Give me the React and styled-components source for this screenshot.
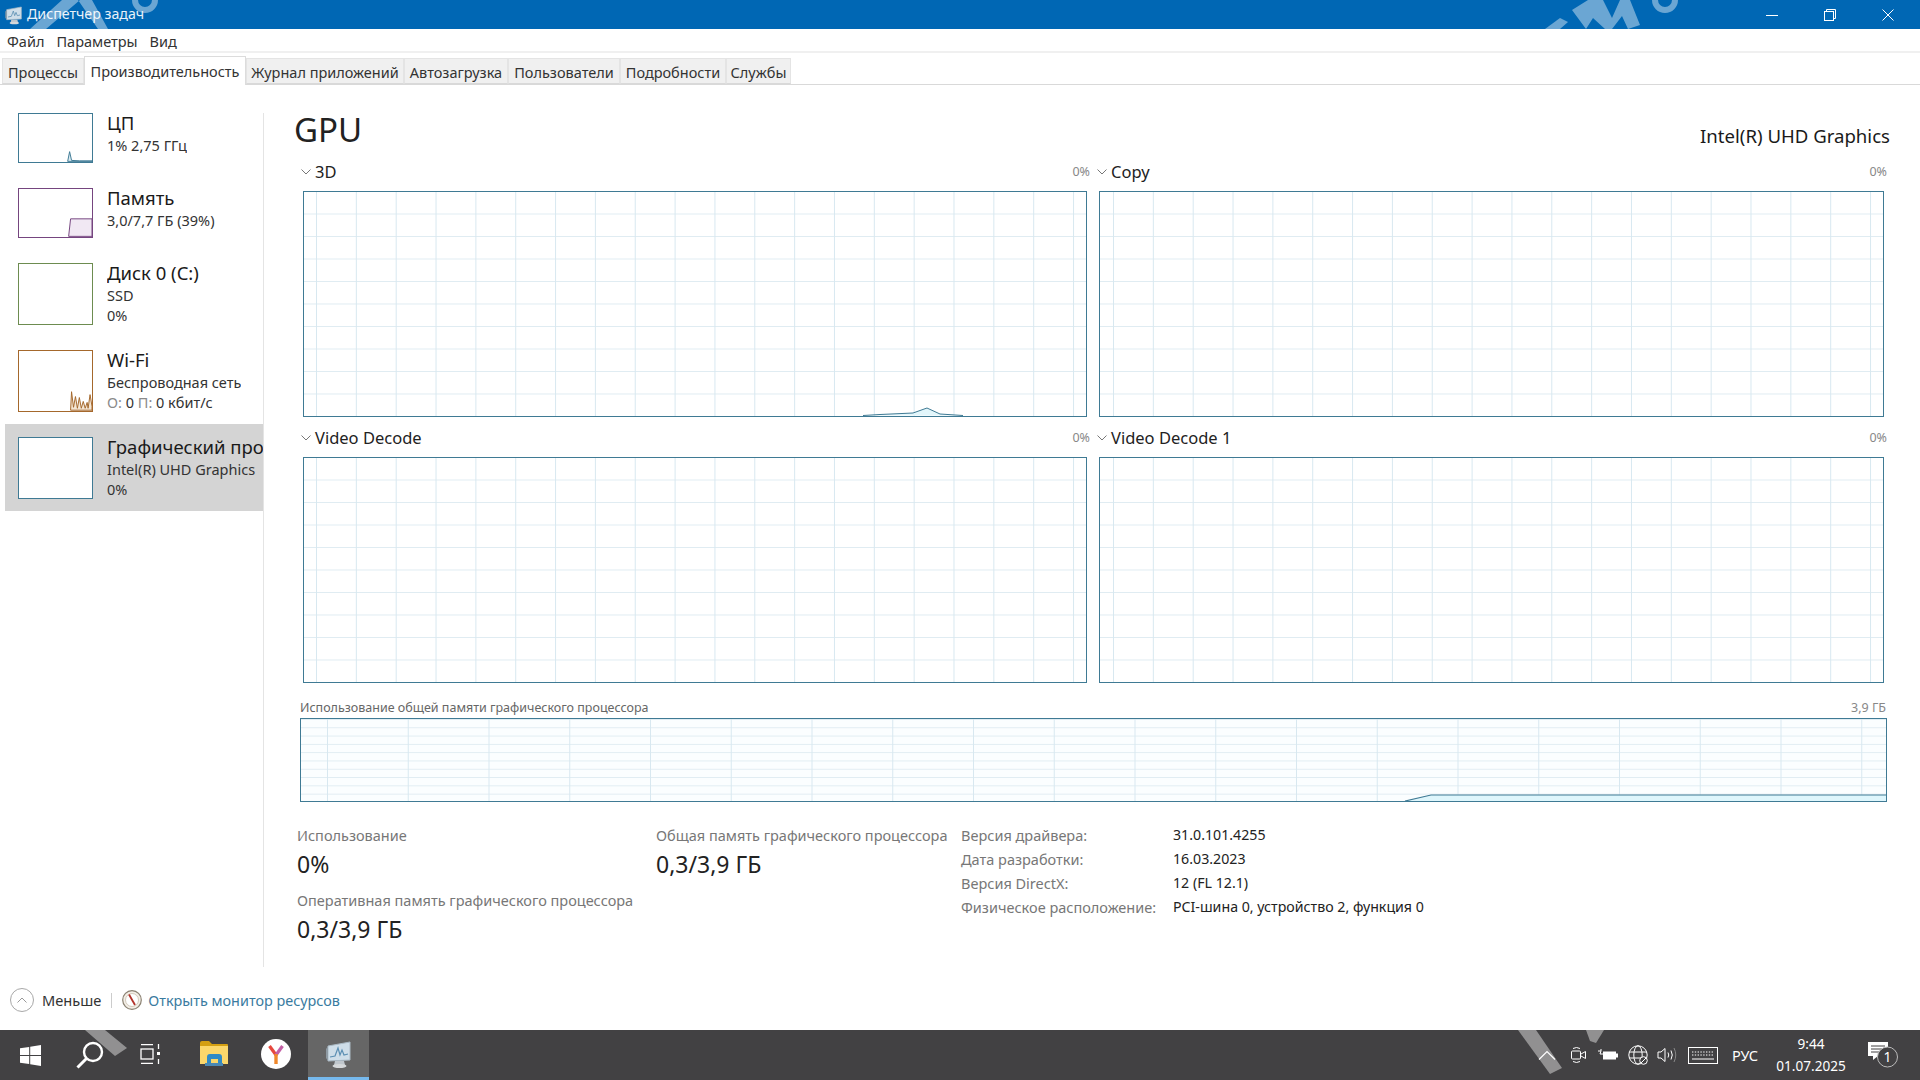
import styled, { createGlobalStyle } from "styled-components";

const GlobalStyle = createGlobalStyle`
  html, body {
    margin: 0;
    padding: 0;
    background: #fff;
  }
  body {
    font-family: "Noto Sans", "Open Sans", sans-serif;
    color: #1a1a1a;
    overflow: hidden;
  }
`;

const TABS = ["Процессы", "Производительность", "Журнал приложений", "Автозагрузка", "Пользователи", "Подробности", "Службы"];
const TAB_WIDTHS = [82, 162, 158, 104, 112, 106, 65];

const DEVICES = [
  { title: "ЦП", lines: ["1% 2,75 ГГц"], color: "#3f7a94", h: 50, tall: false, kind: "cpu" },
  { title: "Память", lines: ["3,0/7,7 ГБ (39%)"], color: "#75457f", h: 50, tall: false, kind: "mem" },
  { title: "Диск 0 (C:)", lines: ["SSD", "0%"], color: "#6d8c50", h: 62, tall: true, kind: "none" },
  { title: "Wi-Fi", lines: ["Беспроводная сеть", "net"], color: "#a5682c", h: 62, tall: true, kind: "net" },
  { title: "Графический процессор", lines: ["Intel(R) UHD Graphics", "0%"], color: "#3f7a94", h: 62, tall: true, kind: "gpu", active: true },
];

const DRIVER = [
  ["Версия драйвера:", "31.0.101.4255"],
  ["Дата разработки:", "16.03.2023"],
  ["Версия DirectX:", "12 (FL 12.1)"],
  ["Физическое расположение:", "PCI-шина 0, устройство 2, функция 0"],
];

function ThumbLine({ kind, color }) {
  if (kind === "cpu") {
    return (
      <svg width="75" height="48" viewBox="0 0 75 48">
        <path d="M50 48 L52 38 L54 47 L62 47.5 L75 47.5 L75 48 Z" fill="#dcecf3" stroke={color} strokeWidth="1" />
      </svg>
    );
  }
  if (kind === "mem") {
    return (
      <svg width="75" height="48" viewBox="0 0 75 48">
        <path d="M51 48 L53 30 L75 30 L75 48 Z" fill="#f1e8f3" stroke={color} strokeWidth="1" />
      </svg>
    );
  }
  if (kind === "net") {
    return (
      <svg width="75" height="60" viewBox="0 0 75 60">
        <path
          d="M53 60 L54 41 L56 57 L58 46 L60 58 L62 47 L64 58 L66 51 L68 58 L70 52 L71 58 L73 44 L75 56 L75 60 Z"
          fill="#f4e6d4"
          stroke={color}
          strokeWidth="1"
        />
      </svg>
    );
  }
  return null;
}

function Chevron({ color = "#777", up }) {
  return (
    <svg width="10" height="6" viewBox="0 0 10 6">
      <path d={up ? "M0.5 5.5 L5 1 L9.5 5.5" : "M0.5 0.5 L5 5 L9.5 0.5"} fill="none" stroke={color} strokeWidth="1" />
    </svg>
  );
}

function GpuChart({ title, $offset, spark }) {
  return (
    <Panel>
      <PanelHead>
        <PanelTitle>
          <Chevron />
          {title}
        </PanelTitle>
        <SmallGray>0%</SmallGray>
      </PanelHead>
      <Graph $offset={$offset}>
        {spark && (
          <svg width="782" height="224" viewBox="304 193 782 224">
            <path d="M863 416.5 L913 414 L927 409 L940 415 L963 416.5 Z" fill="#e2f6fb" />
            <path d="M863 416.5 L880 415.5 L913 414 L927 409 L940 415 L963 416.5" fill="none" stroke="#3f7a94" strokeWidth="1" />
          </svg>
        )}
      </Graph>
    </Panel>
  );
}

function WindowsLogo() {
  return (
    <svg width="21" height="21" viewBox="0 0 21 21" fill="#fff">
      <path d="M0 3.2 L9.2 2 V10 H0 Z" />
      <path d="M10.2 1.8 L21 0 V10 H10.2 Z" />
      <path d="M0 11 H9.2 V19 L0 17.8 Z" />
      <path d="M10.2 11 H21 V21 L10.2 19.2 Z" />
    </svg>
  );
}

function SearchIcon() {
  return (
    <svg width="28" height="28" viewBox="0 0 28 28" fill="none" stroke="#fff">
      <circle cx="17" cy="11" r="9" strokeWidth="2.4" />
      <path d="M10.5 17.5 L1.5 26.5" strokeWidth="3" />
    </svg>
  );
}

function TaskViewIcon() {
  return (
    <svg width="21" height="20" viewBox="0 0 21 20" fill="none" stroke="#fff" strokeWidth="1.3">
      <path d="M1 0.7 H13 M1 19.3 H13" />
      <rect x="1" y="5" width="12" height="10" />
      <path d="M18.5 0 V5 M18.5 15 V20" />
      <rect x="17" y="8" width="3" height="3" fill="#fff" stroke="none" />
    </svg>
  );
}

function FolderIcon() {
  return (
    <svg width="28" height="25" viewBox="0 0 28 25">
      <path d="M0 2 Q0 0 2 0 H9 L12 3 H27 Q28 3 28 4 V6 H0 Z" fill="#d49f12" />
      <path d="M0 5 H28 V23 H0 Z" fill="#fbd76b" />
      <path d="M7 23 V16 Q7 13 10 13 H19 Q22 13 22 16 V23 H18 V18 H11 V23 Z" fill="#2f8ac6" />
      <path d="M5 22 H23 V25 H5 Z" fill="#4a88b4" />
    </svg>
  );
}

function YandexIcon() {
  return (
    <svg width="30" height="30" viewBox="0 0 30 30">
      <circle cx="15" cy="15" r="15" fill="#fff" />
      <path d="M15 16 L8.5 7" stroke="#e6483d" strokeWidth="3.2" fill="none" />
      <path d="M15 16 L21.5 7" stroke="#c35fa5" strokeWidth="3.2" fill="none" />
      <path d="M15 15 V25" stroke="#f0882b" strokeWidth="3.4" fill="none" />
    </svg>
  );
}

function MonitorIcon({ size = 30 }) {
  return (
    <svg width={size} height={size} viewBox="0 0 30 30">
      <path d="M4 7 L26 3 V21 L4 22 Z" fill="#cfdee9" stroke="#aab9c4" strokeWidth="1" />
      <path d="M6 18 L11 17 L14 9 L16 16 L18 11 L20 16 L24 15" fill="none" stroke="#5c8fb3" strokeWidth="1.2" />
      <path d="M11 22 H20 L21 26 H10 Z" fill="#bfc6cc" />
      <ellipse cx="15.5" cy="27" rx="7" ry="2" fill="#d5d8da" />
      <path d="M2 10 L4 7 V22 L2 19 Z" fill="#8e9aa3" />
    </svg>
  );
}

function ResourceIcon() {
  return (
    <svg width="20" height="20" viewBox="0 0 20 20">
      <circle cx="10" cy="10" r="9.3" fill="#f3eee6" stroke="#8a8172" strokeWidth="1.2" />
      <circle cx="10" cy="10" r="6.5" fill="#fff" stroke="#c9bfae" strokeWidth="0.8" />
      <path d="M7 4.5 L13 15" stroke="#b3322a" strokeWidth="1.8" />
    </svg>
  );
}

function TrayMeet() {
  return (
    <svg width="15" height="18" viewBox="0 0 15 18" fill="none" stroke="#fff" strokeWidth="1">
      <path d="M2 2.5 Q5.5 0.5 9 2.5 M2 15.5 Q5.5 17.5 9 15.5" />
      <rect x="0.5" y="5" width="9" height="8" rx="1" />
      <path d="M10 8 L14.5 5.5 V12.5 L10 10" />
    </svg>
  );
}

function TrayBattery() {
  return (
    <svg width="20" height="12" viewBox="0 0 20 12">
      <path d="M0 2 H3 V0 M3 2 L2 5 H5" fill="none" stroke="#fff" strokeWidth="1" />
      <rect x="5" y="2.5" width="13" height="8" fill="#fff" />
      <rect x="18" y="4.5" width="2" height="4" fill="#fff" />
    </svg>
  );
}

function TrayGlobe() {
  return (
    <svg width="20" height="20" viewBox="0 0 20 20" fill="none" stroke="#fff" strokeWidth="1">
      <circle cx="10" cy="10" r="9.2" />
      <ellipse cx="10" cy="10" rx="4.2" ry="9.2" />
      <path d="M1 7 H19 M1 13 H19" />
      <circle cx="15.5" cy="15.5" r="3.8" fill="#424143" />
      <path d="M13 18 L18 13" />
    </svg>
  );
}

function TraySound() {
  return (
    <svg width="20" height="16" viewBox="0 0 20 16" fill="none" stroke="#fff" strokeWidth="1">
      <path d="M1 5 H4 L8 1.5 V14.5 L4 11 H1 Z" />
      <path d="M11 5.5 Q12.5 8 11 10.5" />
      <path d="M14 3.5 Q16.5 8 14 12.5" />
      <path d="M17 1 Q20.5 8 17 15" stroke="#888" />
    </svg>
  );
}

function TrayKeyboard() {
  return (
    <svg width="30" height="17" viewBox="0 0 30 17" fill="none" stroke="#fff" strokeWidth="1">
      <rect x="0.5" y="0.5" width="29" height="16" />
      <path d="M4 5 H26 M4 8 H26" strokeDasharray="1.4 1.4" />
      <path d="M4 12 H26" />
    </svg>
  );
}

function Notification() {
  return (
    <svg width="31" height="27" viewBox="0 0 31 27">
      <path d="M0 0 H20 V14 H10 L5 18 V14 H0 Z" fill="#fff" />
      <path d="M3 4 H17 M3 7 H17 M3 10 H13" stroke="#424143" strokeWidth="1" />
      <circle cx="19.5" cy="15" r="10" fill="#424143" stroke="#bbb" strokeWidth="1" />
    </svg>
  );
}

export default function App() {
  return (
    <>
      <GlobalStyle />
      <Screen>
        <TitleBar>
          <TitleIcon>
            <MonitorIcon size={20} />
          </TitleIcon>
          <TitleText>Диспетчер задач</TitleText>
          <WindowButtons>
            <svg width="12" height="12" viewBox="0 0 12 12" stroke="#fff" fill="none">
              <path d="M0 6.5 H12" />
            </svg>
            <svg width="12" height="12" viewBox="0 0 12 12" stroke="#fff" fill="none">
              <rect x="0.5" y="2.5" width="9" height="9" />
              <path d="M2.5 2.5 V0.5 H11.5 V9.5 H9.5" />
            </svg>
            <svg width="12" height="12" viewBox="0 0 12 12" stroke="#fff" fill="none">
              <path d="M0.5 0.5 L11.5 11.5 M11.5 0.5 L0.5 11.5" />
            </svg>
          </WindowButtons>
          <Watermark width="1920" height="29" viewBox="0 0 1920 29">
            <path d="M30 29 L46 29 L80 0 L62 0 Z M78 0 L92 0 L108 29 L98 29 Z" />
            <path d="M1545 29 L1560 29 L1568 22 L1560 18 Z" />
            <path d="M1572 10 L1588 0 L1603 0 L1612 18 L1620 0 L1630 0 L1640 25 L1628 29 L1622 16 L1612 29 L1605 29 L1593 18 L1586 29 Z" />
            <path d="M1652 0 A13 13 0 0 0 1678 0 L1672 0 A7 7 0 0 1 1658 0 Z" />
            <path d="M132 0 A13 13 0 0 0 158 0 L152 0 A7 7 0 0 1 138 0 Z" />
          </Watermark>
        </TitleBar>
        <MenuBar>
          <MenuItem>Файл</MenuItem>
          <MenuItem>Параметры</MenuItem>
          <MenuItem>Вид</MenuItem>
        </MenuBar>
        <TabStrip>
          {TABS.map((t, i) => (
            <Tab key={t} $w={TAB_WIDTHS[i]} $active={i === 1}>
              {t}
            </Tab>
          ))}
        </TabStrip>
        <Main>
          <Sidebar>
            {DEVICES.map((d) => (
              <DeviceRow key={d.title} $tall={d.tall} $active={d.active}>
                <Thumb $color={d.color} $h={d.h}>
                  <ThumbLine kind={d.kind} color={d.color} />
                </Thumb>
                <DeviceText>
                  <DeviceTitle>{d.title}</DeviceTitle>
                  {d.lines.map((l) =>
                    l === "net" ? (
                      <DeviceLine key={l}>
                        <Muted>О:</Muted> 0 <Muted>П:</Muted> 0 кбит/с
                      </DeviceLine>
                    ) : (
                      <DeviceLine key={l}>{l}</DeviceLine>
                    )
                  )}
                </DeviceText>
              </DeviceRow>
            ))}
          </Sidebar>
          <Divider />
          <Content>
            <HeadRow>
              <Heading>GPU</Heading>
              <AdapterName>Intel(R) UHD Graphics</AdapterName>
            </HeadRow>
            <ChartGrid>
              <GpuChart title="3D" $offset={12} spark />
              <GpuChart title="Copy" $offset={13} />
              <GpuChart title="Video Decode" $offset={12} />
              <GpuChart title="Video Decode 1" $offset={13} />
            </ChartGrid>
            <SharedHead>
              <SmallGray $dark>Использование общей памяти графического процессора</SmallGray>
              <SmallGray>3,9 ГБ</SmallGray>
            </SharedHead>
            <SharedGraph>
              <svg width="1585" height="82" viewBox="301 720 1585 82">
                <path d="M1405 802 L1431 796 L1886 796 L1886 802 Z" fill="#def6fc" />
                <path d="M1405 802 L1431 796 L1886 796" fill="none" stroke="#3f7a94" strokeWidth="1.2" />
              </svg>
            </SharedGraph>
            <Stats>
              <StatColumn>
                <StatLabel>Использование</StatLabel>
                <StatValue>0%</StatValue>
                <StatLabel $gap>Оперативная память графического процессора</StatLabel>
                <StatValue>0,3/3,9 ГБ</StatValue>
              </StatColumn>
              <StatColumn>
                <StatLabel>Общая память графического процессора</StatLabel>
                <StatValue>0,3/3,9 ГБ</StatValue>
              </StatColumn>
              <DriverTable>
                {DRIVER.map(([k, v]) => (
                  <DriverRow key={k}>
                    <DriverKey>{k}</DriverKey>
                    <DriverValue>{v}</DriverValue>
                  </DriverRow>
                ))}
              </DriverTable>
            </Stats>
          </Content>
        </Main>
        <Footer>
          <LessCircle>
            <Chevron up color="#999" />
          </LessCircle>
          <LessText>Меньше</LessText>
          <FooterSep />
          <ResourceIcon />
          <MonitorLink>Открыть монитор ресурсов</MonitorLink>
        </Footer>
        <Taskbar>
          <StartSlot>
            <WindowsLogo />
          </StartSlot>
          <SearchSlot>
            <SearchIcon />
          </SearchSlot>
          <TaskSlot $w={50}>
            <TaskViewIcon />
          </TaskSlot>
          <TaskSlot $w={78}>
            <FolderIcon />
          </TaskSlot>
          <TaskSlot $w={46}>
            <YandexIcon />
          </TaskSlot>
          <TaskSlot $w={61} $active>
            <MonitorIcon size={30} />
          </TaskSlot>
          <Tray>
            <TrayChevron>
              <svg width="18" height="10" viewBox="0 0 18 10" fill="none" stroke="#fff" strokeWidth="1.2">
                <path d="M1 9.5 L9 1.5 L17 9.5" />
              </svg>
            </TrayChevron>
            <TrayIcon $w={29}>
              <TrayMeet />
            </TrayIcon>
            <TrayIcon $w={30}>
              <TrayBattery />
            </TrayIcon>
            <TrayIcon $w={29}>
              <TrayGlobe />
            </TrayIcon>
            <TrayIcon $w={30}>
              <TraySound />
            </TrayIcon>
            <TrayIcon $w={36} $end>
              <TrayKeyboard />
            </TrayIcon>
            <Lang>РУС</Lang>
            <Clock>
              <span>9:44</span>
              <span>01.07.2025</span>
            </Clock>
            <Notify>
              <Notification />
              <NotifyCount>1</NotifyCount>
            </Notify>
          </Tray>
          <Watermark width="1920" height="50" viewBox="0 1030 1920 50">
            <path d="M85 1030 L105 1030 L127 1048 L115 1056 Z" />
            <path d="M1518 1030 L1536 1030 L1562 1068 L1550 1074 Z" />
            <path d="M1586 1030 L1604 1030 L1596 1043 L1590 1041 Z" />
          </Watermark>
        </Taskbar>
      </Screen>
    </>
  );
}

const Screen = styled.div`
  width: 1920px;
  height: 1080px;
  display: flex;
  flex-direction: column;
  background: #fff;
`;

const Watermark = styled.svg`
  position: absolute;
  left: 0;
  top: 0;
  fill: rgba(255, 255, 255, 0.42);
  pointer-events: none;
`;

const TitleBar = styled.div`
  position: relative;
  height: 29px;
  flex: none;
  background: #0067b4;
  display: flex;
  align-items: center;
  color: #fff;
  overflow: hidden;
`;

const TitleIcon = styled.div`
  display: flex;
  width: 27px;
  justify-content: center;
`;

const TitleText = styled.div`
  font-size: 14.2px;
  color: #e8f1f9;
  padding-bottom: 2px;
`;

const WindowButtons = styled.div`
  margin-left: auto;
  padding-right: 26px;
  display: flex;
  align-items: center;
  gap: 46px;
`;

const MenuBar = styled.div`
  height: 24px;
  box-sizing: border-box;
  flex: none;
  border-bottom: 2px solid #f0f0f0;
  display: flex;
  align-items: center;
  padding: 2px 0 0 7px;
  gap: 12px;
`;

const MenuItem = styled.div`
  font-size: 14.5px;
  color: #333;
`;

const TabStrip = styled.div`
  height: 32px;
  box-sizing: border-box;
  flex: none;
  padding-left: 2px;
  border-bottom: 1px solid #d9d9d9;
  display: flex;
  align-items: flex-end;
`;

const Tab = styled.div`
  box-sizing: border-box;
  width: ${(p) => p.$w}px;
  height: ${(p) => (p.$active ? 29 : 26)}px;
  margin-bottom: ${(p) => (p.$active ? -1 : 0)}px;
  padding-top: ${(p) => (p.$active ? 0 : 2)}px;
  background: ${(p) => (p.$active ? "#fff" : "#f0f0f0")};
  border: 1px solid ${(p) => (p.$active ? "#dcdcdc" : "#e4e4e4")};
  border-bottom: ${(p) => (p.$active ? "none" : "1px solid #d9d9d9")};
  display: flex;
  align-items: center;
  justify-content: center;
  font-size: 14.5px;
  color: #333;
  white-space: nowrap;
`;

const Main = styled.div`
  flex: 1;
  display: flex;
  min-height: 0;
`;

const Sidebar = styled.div`
  width: 258px;
  margin-left: 5px;
  padding-top: 15px;
  flex: none;
`;

const DeviceRow = styled.div`
  height: ${(p) => (p.$tall ? 87 : 75)}px;
  box-sizing: border-box;
  padding-left: 13px;
  display: flex;
  gap: 14px;
  background: ${(p) => (p.$active ? "#d4d4d4" : "transparent")};
  overflow: hidden;
`;

const Thumb = styled.div`
  box-sizing: border-box;
  width: 75px;
  height: ${(p) => p.$h}px;
  align-self: center;
  flex: none;
  background: #fff;
  border: 1px solid ${(p) => p.$color};
  display: flex;
  align-items: flex-end;
  justify-content: center;
  svg {
    display: block;
  }
`;

const DeviceText = styled.div`
  padding-top: 10px;
  white-space: nowrap;
  min-width: 0;
  overflow: hidden;
`;

const DeviceTitle = styled.div`
  font-size: 18.5px;
  line-height: 25px;
  color: #1a1a1a;
`;

const DeviceLine = styled.div`
  font-size: 14.5px;
  line-height: 20px;
  color: #333;
`;

const Muted = styled.span`
  color: #8a8a8a;
`;

const Divider = styled.div`
  width: 1px;
  flex: none;
  margin-top: 28px;
  background: #e4e4e4;
`;

const Content = styled.div`
  flex: 1;
  padding: 23px 30px 0 32px;
  min-width: 0;
`;

const HeadRow = styled.div`
  height: 53px;
  display: flex;
  justify-content: space-between;
`;

const Heading = styled.div`
  font-size: 33px;
  font-weight: 400;
  line-height: 44px;
  margin-left: -2px;
  color: #222;
`;

const AdapterName = styled.div`
  font-size: 18.6px;
  line-height: 25px;
  padding-top: 15px;
`;

const ChartGrid = styled.div`
  margin: 0 7px;
  display: grid;
  grid-template-columns: 784px 785px;
  column-gap: 12px;
  row-gap: 10px;
`;

const Panel = styled.div`
  display: flex;
  flex-direction: column;
`;

const PanelHead = styled.div`
  height: 30px;
  margin: 0 -3px 0 -2px;
  display: flex;
  justify-content: space-between;
  align-items: center;
  padding-bottom: 9px;
  box-sizing: border-box;
`;

const PanelTitle = styled.div`
  font-size: 16.5px;
  display: flex;
  align-items: center;
  gap: 4px;
  color: #222;
`;

const SmallGray = styled.div`
  font-size: 12.5px;
  color: ${(p) => (p.$dark ? "#666" : "#888")};
`;

const Graph = styled.div`
  box-sizing: border-box;
  height: 226px;
  border: 1px solid #3f7a94;
  background-color: #fff;
  background-image: linear-gradient(to right, #d8e8f0 1px, transparent 1px),
    linear-gradient(to bottom, #e0ecf2 1px, transparent 1px);
  background-size: 39.85px 100%, 100% 22.5px;
  background-position: ${(p) => p.$offset}px 0, 0 -1px;
  svg {
    display: block;
  }
`;

const SharedHead = styled.div`
  margin: 16px 0 0 4px;
  height: 19px;
  display: flex;
  justify-content: space-between;
  align-items: center;
  padding: 0 4px 2px 0;
  box-sizing: border-box;
`;

const SharedGraph = styled.div`
  box-sizing: border-box;
  height: 84px;
  margin: 0 3px 0 4px;
  border: 1px solid #3f7a94;
  background-color: #fbfeff;
  background-image: linear-gradient(to right, #d8e8f0 1px, transparent 1px),
    linear-gradient(to bottom, #e0ecf2 1px, transparent 1px);
  background-size: 80.75px 100%, 100% 8.3px;
  background-position: 26px 0, 0 0;
  svg {
    display: block;
  }
`;

const Stats = styled.div`
  margin: 21px 0 0 1px;
  display: grid;
  grid-template-columns: 359px 305px auto;
`;

const StatColumn = styled.div`
  display: flex;
  flex-direction: column;
`;

const StatLabel = styled.div`
  font-size: 14.5px;
  line-height: 24px;
  color: #777;
  margin-top: ${(p) => (p.$gap ? 7 : 0)}px;
  white-space: nowrap;
`;

const StatValue = styled.div`
  font-size: 23px;
  line-height: 34px;
  color: #222;
`;

const DriverTable = styled.div`
  display: flex;
  flex-direction: column;
`;

const DriverRow = styled.div`
  display: grid;
  grid-template-columns: 212px auto;
  line-height: 24px;
  font-size: 14.5px;
`;

const DriverKey = styled.div`
  color: #777;
`;

const DriverValue = styled.div`
  color: #222;
  font-size: 14.2px;
`;

const Footer = styled.div`
  height: 63px;
  flex: none;
  padding: 3px 0 0 10px;
  box-sizing: border-box;
  display: flex;
  align-items: center;
`;

const LessCircle = styled.div`
  box-sizing: border-box;
  width: 24px;
  height: 24px;
  border: 1px solid #a8a8a8;
  border-radius: 50%;
  display: flex;
  align-items: center;
  justify-content: center;
`;

const LessText = styled.div`
  margin-left: 8px;
  font-size: 14.6px;
  color: #333;
`;

const FooterSep = styled.div`
  width: 1px;
  height: 15px;
  margin: 0 10px;
  background: #ccc;
`;

const MonitorLink = styled.div`
  margin-left: 6px;
  font-size: 14.4px;
  color: #3a7ba0;
`;

const Taskbar = styled.div`
  position: relative;
  height: 50px;
  flex: none;
  background: #424143;
  display: flex;
  align-items: stretch;
`;

const StartSlot = styled.div`
  width: 60px;
  padding-left: 20px;
  box-sizing: border-box;
  display: flex;
  align-items: center;
`;

const SearchSlot = styled.div`
  width: 65px;
  padding-left: 16px;
  box-sizing: border-box;
  display: flex;
  align-items: center;
`;

const TaskSlot = styled.div`
  width: ${(p) => p.$w}px;
  box-sizing: border-box;
  display: flex;
  align-items: center;
  justify-content: center;
  margin-left: ${(p) => (p.$active ? 9 : 0)}px;
  background: ${(p) => (p.$active ? "#666" : "transparent")};
  border-bottom: 3px solid ${(p) => (p.$active ? "#76b9ed" : "transparent")};
`;

const Tray = styled.div`
  margin-left: auto;
  padding-right: 21px;
  display: flex;
  align-items: center;
  color: #fff;
`;

const TrayChevron = styled.div`
  display: flex;
  margin-right: 8px;
`;

const TrayIcon = styled.div`
  width: ${(p) => p.$w}px;
  display: flex;
  justify-content: ${(p) => (p.$end ? "flex-end" : "center")};
`;

const Lang = styled.div`
  width: 54px;
  text-align: center;
  font-size: 14.5px;
`;

const Clock = styled.div`
  width: 78px;
  display: flex;
  flex-direction: column;
  align-items: center;
  font-size: 13.6px;
  line-height: 22px;
  margin-right: 18px;
`;

const Notify = styled.div`
  position: relative;
  width: 31px;
  height: 27px;
  svg {
    display: block;
  }
`;

const NotifyCount = styled.div`
  position: absolute;
  left: 9.5px;
  top: 5px;
  width: 20px;
  height: 20px;
  line-height: 20px;
  text-align: center;
  font-size: 14px;
  color: #fff;
`;
